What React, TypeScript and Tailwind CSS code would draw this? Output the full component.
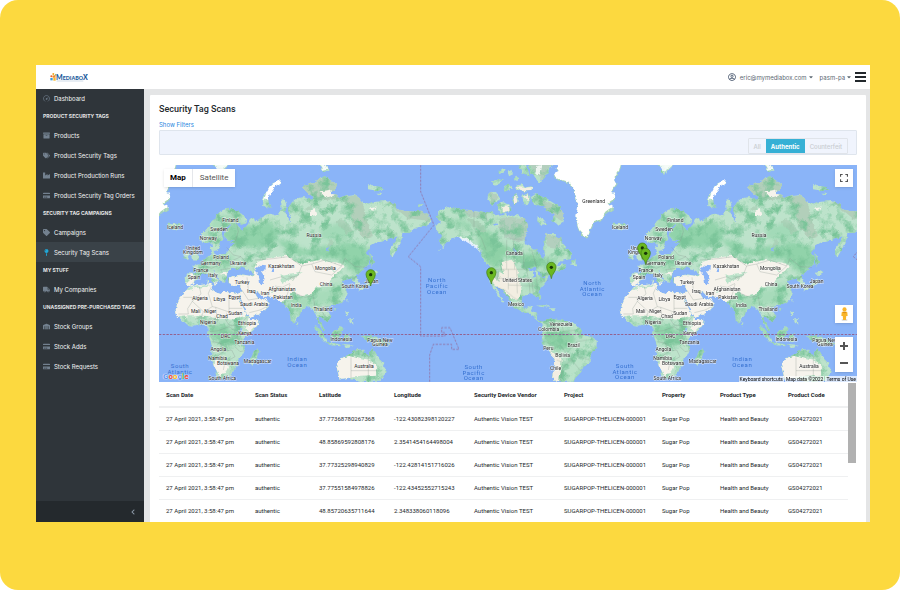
import React, { useState } from "react";
import {
  FaArchive,
  FaTags,
  FaTag,
  FaIndustry,
  FaCreditCard,
  FaMapPin,
  FaTruck,
  FaWarehouse,
  FaChevronLeft,
  FaCaretDown,
  FaRegUserCircle,
} from "react-icons/fa";

const SpeedIcon = ({ className }: { className?: string }) => (
  <svg viewBox="0 0 16 16" className={className} fill="none" stroke="currentColor" strokeWidth="1.500" strokeLinecap="round">
    <path d="M4 14A7 7 0 1 1 12 14M8 9L11 6" />
    <circle cx="8" cy="9" r="1" fill="currentColor" />
  </svg>
);

const menu = [
  { items: [{ label: "Dashboard", icon: SpeedIcon }] },
  {
    title: "Product Security Tags",
    items: [
      { label: "Products", icon: FaArchive },
      { label: "Product Security Tags", icon: FaTags },
      { label: "Product Production Runs", icon: FaIndustry },
      { label: "Product Security Tag Orders", icon: FaCreditCard },
    ],
  },
  {
    title: "Security Tag Campaigns",
    items: [
      { label: "Campaigns", icon: FaTag },
      { label: "Security Tag Scans", icon: FaMapPin, active: true },
    ],
  },
  { title: "My Stuff", items: [{ label: "My Companies", icon: FaTruck }] },
  {
    title: "Unassigned Pre-Purchased Tags",
    items: [
      { label: "Stock Groups", icon: FaWarehouse },
      { label: "Stock Adds", icon: FaCreditCard },
      { label: "Stock Requests", icon: FaCreditCard },
    ],
  },
];

const columns = [
  { label: "Scan Date", width: 89 },
  { label: "Scan Status", width: 64 },
  { label: "Latitude", width: 75 },
  { label: "Longitude", width: 80 },
  { label: "Security Device Vendor", width: 90 },
  { label: "Project", width: 98 },
  { label: "Property", width: 58 },
  { label: "Product Type", width: 68 },
  { label: "Product Code", width: 67 },
];

const scans = [
  ["37.77368780267368", "-122.43082398120227"],
  ["48.85869592808176", "2.3541454164498004"],
  ["37.77325298940829", "-122.42814151716026"],
  ["37.77551584978826", "-122.43452552715243"],
  ["48.85720635711644", "2.348338060118096"],
];

const eurasia =
  "M97 376L95 352L100 343L126 345L129 332L118 322L131 317L144 314L152 304L162 298L170 291L174 278L170 266L179 262L182 280L186 290L205 286L218 284L224 270L234 262L247 256L226 251L248 246L224 245L212 232L216 217L230 203L231 194L220 204L208 216L205 228L211 238L201 250L198 264L190 277L182 278L177 262L172 252L160 255L145 251L139 238L143 227L156 215L166 203L176 187L186 173L197 162L211 152L230 149L246 155L263 165L280 180L277 193L262 197L245 190L254 202L262 213L274 208L286 195L290 181L302 177L306 190L320 180L336 170L350 164L360 170L374 166L383 154L382 130L390 119L397 135L394 160L402 178L410 190L412 176L403 160L402 146L412 142L417 129L432 118L450 114L470 122L490 116L520 112L545 109L560 118L580 111L602 109L616 118L626 130L646 137L665 128L700 126L722 138L728 150L750 155L786 158L800 155L825 170L833 193L815 203L800 204L776 216L760 225L748 225L746 240L732 268L716 296L708 290L710 268L728 243L730 232L712 240L700 245L672 250L652 262L645 272L638 282L647 292L648 315L636 326L616 345L605 352L612 362L620 380L611 387L602 372L592 360L576 362L565 372L575 385L582 400L575 420L560 435L540 440L525 443L518 447L522 457L532 470L530 481L516 488L505 478L496 474L500 490L508 503L516 515L506 512L495 495L490 475L484 459L478 450L466 445L455 440L448 452L440 465L430 478L428 490L421 496L414 485L410 465L405 449L396 445L386 430L370 420L345 415L330 418L311 398L302 402L311 416L322 425L335 420L348 432L340 450L315 465L290 477L283 470L270 440L258 418L255 408L262 398L262 381L240 380L228 375L225 362L234 351L248 352L265 349L290 353L302 345L290 335L272 330L264 325L254 333L236 329L226 338L221 352L216 366L208 375L200 366L190 350L183 338L178 336L186 350L196 365L190 373L182 374L170 356L160 345L148 344L138 350L134 360L125 366L120 376L109 382Z";
const africa =
  "M106 386L118 380L142 378L170 375L176 379L172 390L185 400L200 405L216 398L235 402L250 405L257 410L255 420L270 450L280 470L290 484L315 480L317 490L300 515L276 535L268 552L272 575L265 590L255 600L250 620L240 640L225 655L200 660L190 652L185 630L172 600L176 572L170 550L162 530L165 510L155 499L140 498L120 503L100 500L84 485L70 470L65 455L70 435L80 415L95 400Z";
const australia =
  "M550 622L552 606L580 592L600 578L615 570L625 572L636 573L632 585L646 591L652 572L657 567L668 590L685 610L697 630L692 650L680 668L620 668L590 660L560 662L556 645Z";
const isles =
  "M112 303L118 285L114 270L124 262L130 272L127 280L138 297L136 306ZM91 300L92 285L104 280L108 290L102 303ZM42 205L45 194L58 196L76 192L80 205L66 214L50 213ZM328 138L326 122L332 108L342 98L347 84L360 72L382 65L380 74L362 84L350 98L342 112L344 132L352 144L340 149ZM650 278L656 290L660 312L654 325L650 304ZM650 342L668 334L676 340L660 352ZM657 358L656 375L640 386L615 395L612 390L634 382L645 370ZM294 590L300 580L312 568L316 582L306 610L297 621L288 612ZM482 502L492 505L510 525L520 545L516 552L500 535ZM518 552L545 553L560 557L560 562L530 559ZM533 525L545 515L562 500L571 508L562 525L558 540L542 545L532 535ZM572 525L590 521L580 528L592 535L582 536L584 550L574 548ZM616 528L632 532L645 530L670 537L700 552L710 560L692 557L675 562L655 550L640 550L632 538ZM574 455L582 460L583 472L576 468ZM584 482L596 480L598 495L588 492ZM579 422L584 420L582 433ZM540 448L547 448L544 456ZM429 488L435 497L430 503ZM566 558L600 560L580 568ZM180 374L190 375L186 380ZM158 362L164 363L163 374L158 372ZM446 82L462 78L486 66L500 58L515 52L530 65L548 76L545 92L530 102L545 112L560 118L520 124L490 120L462 106ZM640 85L650 76L658 84L680 86L690 92L664 97L645 94ZM670 104L685 104L680 110ZM496 15L512 15L524 34L512 40L500 28ZM170 15L230 15L222 25L206 36L198 50L188 42L192 27Z";
const deserts =
  "M60 475L60 370L260 372L278 470L235 482L160 474L110 472ZM228 352L300 352L310 310L355 296L400 290L420 305L440 318L470 308L500 303L540 312L570 318L560 340L538 350L522 378L490 382L470 408L440 412L415 398L400 420L350 450L290 480L262 440L262 385L228 378Z";

const americas =
  "M184 154L206 144L232 149L264 155L292 157L326 163L340 156L352 172L362 170L382 165L400 175L415 168L440 182L448 200L445 218L436 238L441 256L462 268L478 276L484 292L491 299L498 290L495 272L499 256L497 240L503 224L528 226L536 238L546 236L552 252L563 268L581 284L578 300L555 304L545 312L528 325L550 316L562 320L555 334L532 340L514 350L506 365L498 375L485 390L481 402L488 420L482 426L474 410L450 405L430 412L428 432L436 446L446 446L455 440L462 442L455 457L474 464L478 482L490 488L510 483L525 480L555 485L590 495L604 510L610 525L640 535L657 545L655 565L640 585L635 608L612 628L600 645L585 668L522 668L525 630L530 600L510 580L495 560L488 540L495 520L490 497L472 480L450 465L430 460L405 445L395 425L375 400L360 385L352 382L360 402L378 432L370 428L345 390L335 370L330 345L334 328L318 305L306 280L285 255L260 240L238 236L222 240L206 252L192 268L175 284L192 264L182 244L190 230L174 215L172 200L190 192L172 178Z";
const arctic =
  "M330 105L345 98L362 108L365 122L340 140L328 125ZM355 138L375 130L392 140L398 155L378 165L358 158ZM340 70L360 60L374 64L360 78L343 80ZM374 82L392 74L402 88L380 98ZM412 80L430 76L442 85L462 82L462 96L430 98L413 92ZM404 108L414 106L420 125L410 140L402 125ZM430 110L450 104L455 125L442 142L432 130ZM455 115L470 105L490 112L520 130L545 145L552 168L558 190L540 200L520 185L528 168L505 156L495 145L476 140L462 130ZM478 175L492 182L505 198L490 200L478 190ZM386 38L396 34L402 46L390 52ZM422 20L440 17L446 30L452 52L432 46ZM448 15L520 15L510 40L496 60L478 70L466 52L456 40ZM358 38L372 28L380 35L366 48ZM406 55L416 50L420 62L410 68ZM582 304L592 304L594 322L576 320ZM470 440L500 438L512 446L492 444ZM510 448L530 448L526 454L512 453ZM118 140L130 138L128 144L118 143ZM310 290L318 300L324 312L314 304ZM0 88L12 90L8 95L0 94Z";
const greenland =
  "M545 15L532 30L538 42L524 48L530 60L552 70L572 75L584 95L592 120L597 150L592 178L600 210L610 232L625 243L633 218L645 195L670 185L684 165L706 150L690 138L712 120L700 98L716 74L708 60L722 40L728 15Z";

type Label = [string, number, number];

const oldWorldLabels: Label[] = [
  ["Iceland", 60, 208],
  ["Finland", 226, 186],
  ["Sweden", 192, 213],
  ["Norway", 160, 241],
  ["United", 114, 270],
  ["Kingdom", 114, 282],
  ["Poland", 198, 296],
  ["Germany", 167, 316],
  ["Ukraine", 249, 315],
  ["France", 138, 336],
  ["Italy", 174, 350],
  ["Spain", 117, 358],
  ["Turkey", 261, 372],
  ["Russia", 477, 232],
  ["Kazakhstan", 379, 323],
  ["Mongolia", 511, 331],
  ["China", 513, 378],
  ["South Korea", 600, 384],
  ["Japan", 650, 370],
  ["Afghanistan", 381, 392],
  ["Pakistan", 384, 416],
  ["India", 424, 441],
  ["Thailand", 504, 453],
  ["Iraq", 289, 398],
  ["Iran", 330, 404],
  ["Saudi Arabia", 297, 438],
  ["Algeria", 135, 419],
  ["Libya", 193, 424],
  ["Egypt", 239, 418],
  ["Mali", 122, 460],
  ["Niger", 166, 460],
  ["Chad", 201, 475],
  ["Sudan", 241, 464],
  ["Nigeria", 159, 492],
  ["Ethiopia", 276, 496],
  ["Kenya", 270, 526],
  ["DRC", 212, 533],
  ["Tanzania", 268, 552],
  ["Angola", 190, 574],
  ["Namibia", 188, 601],
  ["Botswana", 219, 616],
  ["Madagascar", 308, 609],
  ["South Africa", 202, 660],
  ["Indonesia", 559, 543],
  ["Papua New", 675, 546],
  ["Guinea", 675, 558],
  ["Australia", 627, 624],
];

const newWorldLabels: Label[] = [
  ["Greenland", 641, 128],
  ["Canada", 403, 286],
  ["United States", 412, 367],
  ["Mexico", 408, 437],
  ["Venezuela", 543, 497],
  ["Colombia", 506, 514],
  ["Brazil", 581, 560],
  ["Peru", 505, 569],
  ["Bolivia", 548, 591],
  ["Chile", 527, 631],
];

const MapLabels = ({ labels }: { labels: Label[] }) => (
  <g
    fontSize={15}
    textAnchor="middle"
    fill="#1f1f1f"
    stroke="#ffffff"
    strokeOpacity={0.7}
    strokeWidth={3}
    paintOrder="stroke"
  >
    {labels.map(([text, x, y]) => (
      <text key={text} x={x} y={y}>
        {text}
      </text>
    ))}
  </g>
);

const OceanLabel = ({ lines, x, y }: { lines: string[]; x: number; y: number }) => (
  <g
    className="tracking-widest"
    fontSize={18}
    textAnchor="middle"
    fill="#3570d0"
  >
    {lines.map((line, i) => (
      <text key={line} x={x} y={y + i * 17}>
        {line}
      </text>
    ))}
  </g>
);

const OldWorld = ({ southAtlantic }: { southAtlantic: string[] }) => (
  <>
    <g filter="url(#coast)">
      <path d={eurasia + africa + australia + isles} fill="#bde3cb" />
      <g clipPath="url(#oldWorldLand)">
        <path
          d="M430 70L560 50L560 120L480 125ZM560 115L620 108L640 190L660 230L630 240L600 200L590 150ZM700 130L830 160L830 190L760 180Z"
          fill="#b2cfba"
        />
        <g filter="url(#soften)" fill="#91d3aa">
          <path d="M205 215L250 195L300 200L350 190L375 215L370 250L310 270L240 260L210 240Z" />
          <path d="M370 240L420 250L450 275L520 262L590 250L640 265L650 300L640 330L600 345L560 305L480 295L400 285Z" />
          <path d="M168 495L225 500L250 530L245 560L190 550L165 525Z" />
          <path d="M500 210L560 190L600 220L570 250L500 240Z" opacity="0.6" />
          <path d="M390 410L440 415L500 395L560 370L575 400L550 440L480 440L420 470Z" opacity="0.5" />
          <path d="M150 290L220 280L250 300L220 335L160 330Z" opacity="0.5" />
          <path d="M475 500L600 510L700 550L600 555L500 530Z" opacity="0.8" />
          <path d="M180 180L250 160L270 185L200 215L150 240Z" opacity="0.5" />
        </g>
        <rect width="860" height="680" filter="url(#forest)" />
        <path d={deserts} fill="#f6f3ec" />
        <path
          d="M110 345L128 350L122 370L105 375ZM185 600L205 612L225 620L215 645L195 650L180 625ZM550 605L590 592L620 600L650 605L668 620L670 650L600 655L560 665L545 640ZM285 475L320 475L310 500L290 520L275 510ZM465 160L485 150L490 168L468 172ZM500 100L530 95L545 108L515 116ZM195 345L225 338L220 350ZM645 150L665 145L660 155Z"
          fill="#f6f3ec"
        />
        <path
          d="M380 350L425 345L450 338L430 352L395 368L385 375ZM350 390L360 398L350 402ZM520 330L540 325L545 340ZM95 388L130 382L165 377L170 382L120 388L90 402Z"
          fill="#bce3ca"
        />
        <path
          d="M400 355L430 352L420 366ZM530 240L540 255L525 268L520 260ZM455 150L475 140L470 158ZM545 190L565 180L600 215L580 225Z"
          fill="#a5c9b0"
          opacity="0.6"
        />
      </g>
      <path d="M305 332L320 320L336 322L334 334L324 340L332 352L330 374L318 376L315 352ZM355 330L362 328L362 340L356 338ZM515 273L530 262L522 276ZM258 510L266 512L264 522L256 520Z" fill="#8ab4f8" />
      <path d="M330 122L336 104L346 86L362 72L383 63L380 74L362 86L350 102L342 122Z" fill="#ffffff" />
      <path d="M180 15L226 15L206 30L196 44ZM500 15L512 15L520 32L508 36Z" fill="#ffffff" opacity="0.85" />
    </g>
    {/* country borders */}
    <path
      d="M133 380L138 402L112 424M85 412L112 412L112 424L145 455L172 440L160 400L168 382M172 440L182 442L222 456L222 402M222 445L262 445M182 442L186 468L178 480M215 458L212 480L222 495L255 500L262 485L278 470M112 424L98 446L100 462L70 462M145 455L140 470L120 478M140 470L140 498M162 476L190 480L176 500M165 515L190 512L222 500L248 520L245 550L255 560M172 545L198 550L205 575L175 598M205 575L230 570L240 590L222 600L208 615L205 630M240 560L255 575L270 572M105 380M262 392L280 420L312 415M283 458L315 450L335 440M276 352L280 390L305 400M345 380L340 412M360 378L382 382L405 370M405 372L398 400L388 428M410 395L450 412L470 408M475 410L480 445L500 440L520 440M345 360L380 350L395 358L430 345L440 318M355 296L400 290L440 318L470 312L510 300L560 318L530 345L480 335L470 312M560 318L570 295L600 320L636 322M300 300L355 296M258 290L280 315M215 262L235 285L258 290L225 305L196 290M182 295L190 315L170 325L152 318M196 330L225 325M198 175L205 200L212 215M230 160L245 190L250 215L240 245M150 345L158 330M590 360L605 350M625 572M588 592L588 655M640 590L640 660M588 632L668 632M498 450L512 470"
      fill="none"
      stroke="#8a9690"
      strokeOpacity="0.6"
      strokeWidth="1.5"
    />
    <MapLabels labels={oldWorldLabels} />
    <OceanLabel lines={["Indian", "Ocean"]} x={427} y={604} />
    <OceanLabel lines={southAtlantic} x={75} y={624} />
  </>
);

const Greenland = () => (
  <g filter="url(#coast)">
    <path d={greenland} fill="#a9d6b6" />
    <path d={greenland} fill="#ffffff" transform="translate(9 -2) scale(0.985 0.985)" />
  </g>
);

const NewWorld = () => (
  <>
    <g filter="url(#coast)">
      <path d={americas + arctic} fill="#b9e2c8" />
      <g clipPath="url(#newWorldLand)">
        <path d="M365 175L440 180L450 200L440 240L420 250L380 235L360 205ZM448 15L520 15L490 65ZM330 100L365 110L340 140ZM500 225L550 240L540 270L505 265ZM250 150L325 165L330 185L270 175ZM460 110L550 150L555 190L520 170Z" fill="#b3cfbe" />
        <g filter="url(#soften)" fill="#8ed1a6">
          <path d="M290 210L330 215L360 250L420 285L470 285L500 300L540 300L520 330L460 325L420 300L375 290L360 330L330 320L305 270Z" />
          <path d="M495 510L560 515L590 530L580 570L530 575L500 550Z" />
          <path d="M440 380L490 345L500 370L475 400Z" opacity="0.6" />
          <path d="M400 430L430 455L480 485L430 462Z" />
          <path d="M200 190L250 180L290 200L260 215Z" opacity="0.6" />
        </g>
        <rect width="700" height="680" filter="url(#forest)" />
        <path d="M368 312L400 305L412 318L420 355L428 395L420 425L400 420L375 395L350 380L335 365L345 340L375 345ZM508 570L530 590L548 600L545 640L540 668L520 668L528 610ZM412 84L440 86L462 84L460 96L425 96ZM405 112L414 108L418 130L408 136ZM435 112L450 106L450 130ZM370 145L390 142L392 160L372 160Z" fill="#f3eee2" />
        <path d="M262 175L300 190L325 215L315 225L285 205ZM345 330L360 340L362 370L350 360Z" fill="#a4cdb2" opacity="0.8" />
      </g>
      <path d="M232 232L262 238L290 258L304 278L284 262L258 246ZM475 20L490 18L485 45L472 50Z" fill="#ffffff" opacity="0.8" />
      <path d="M448 332L470 326L476 334L466 340ZM462 342L468 340L468 358L462 358ZM478 340L486 342L488 354L480 350ZM486 356L502 350L498 357ZM405 268L412 276L416 290L408 284ZM345 195L356 198L350 204Z" fill="#8ab4f8" />
    </g>
    <path
      d="M282 155L282 205L305 235L318 270M334 328L440 328L448 332M488 350L515 335M352 383L375 390L400 412L428 428M380 240L380 328M400 240L404 328M430 270L432 328M380 235L440 240M455 270L470 322M505 290L500 330M355 330L352 355L385 355M385 328L385 388M410 328L412 400M385 355L450 355M385 375L470 378M440 328L448 375L450 402M455 355L460 400M470 345L472 400M480 365L505 360M500 490L505 505L530 515L530 495M545 487L550 515L585 510M500 530L520 520M510 575L540 555L560 580L575 600L550 620L540 668M520 560L500 545M560 580L590 545L620 540M590 545L595 590L630 600M575 600L600 630M530 600L545 605"
      fill="none"
      stroke="#7f9488"
      strokeOpacity="0.5"
      strokeWidth="1.5"
    />
    <Greenland />
    <MapLabels labels={newWorldLabels} />
    <OceanLabel lines={["North", "Pacific", "Ocean"]} x={171} y={367} />
    <OceanLabel lines={["South", "Pacific", "Ocean"]} x={281} y={627} />
    <OceanLabel lines={["North", "Atlantic", "Ocean"]} x={637} y={375} />
  </>
);

const Pin = ({ x, y }: { x: number; y: number }) => (
  <g transform={`translate(${x} ${y})`}>
    <path
      d="M0 0C-1 -14 -14 -20 -14 -35A14 14 0 0 1 14 -35C14 -20 1 -14 0 0Z"
      fill="#6bb820"
      stroke="#3f7d14"
      strokeWidth="2"
    />
    <circle cy="-34" r="5" fill="#173607" />
  </g>
);

const WorldMap = () => (
  <svg
    viewBox="0 0 2094 651"
    preserveAspectRatio="xMidYMid slice"
    className="block h-full w-full bg-[#8ab4f8] font-['Roboto',sans-serif]"
    role="img"
    aria-label="Scan locations"
  >
    <defs>
      <filter id="coast" x="-5%" y="-5%" width="110%" height="110%">
        <feTurbulence type="fractalNoise" baseFrequency="0.07" numOctaves="3" seed="4" />
        <feDisplacementMap in="SourceGraphic" scale="18" xChannelSelector="R" yChannelSelector="G" colorInterpolationFilters="sRGB" />
      </filter>
      <filter id="soften">
        <feGaussianBlur stdDeviation="6" />
      </filter>
      <filter id="forest" x="0" y="0" width="100%" height="100%" colorInterpolationFilters="sRGB">
        <feTurbulence type="fractalNoise" baseFrequency="0.03" numOctaves="4" seed="9" />
        <feColorMatrix values="0 0 0 0 0.48  0 0 0 0 0.77  0 0 0 0 0.6  3.5 0 0 0 -1.6" />
      </filter>
      <clipPath id="oldWorldLand">
        <path d={eurasia + africa + australia + isles} />
      </clipPath>
      <clipPath id="newWorldLand">
        <path d={americas + arctic} />
      </clipPath>
    </defs>
    <g transform="translate(-672 -15)">
      <Greenland />
    </g>
    <g transform="translate(-12 -15)">
      <OldWorld southAtlantic={["South", "Atlantic"]} />
    </g>
    <g transform="translate(663 -15)">
      <NewWorld />
    </g>
    <g transform="translate(1323 -15)">
      <OldWorld southAtlantic={["South", "Atlantic", "Ocean"]} />
    </g>
    {/* equator and date line */}
    <g fill="none" stroke="#94618f" strokeWidth="2" strokeDasharray="7 4">
      <path d="M0 508H2094" />
      <path
        d="M122 15V95L162 195L85 290L122 320V528H195V518H185V503H210L237 568H215V553H160L149 585V668"
        transform="translate(663 -15)"
      />
      <path d="M162 195L85 290L122 320" transform="translate(1998 -15)" />
    </g>
    <Pin x={635} y={363} />
    <Pin x={997} y={357} />
    <Pin x={1177} y={341} />
    <Pin x={1450} y={283} />
    <Pin x={1460} y={299} />
  </svg>
);

const Logo = () => (
  <a href="#" aria-label="Mediabox" className="flex items-center">
    <svg viewBox="0 0 114 30" className="h-[10px] w-[38px]">
      <circle cx="10" cy="6" r="3" fill="#f5a623" />
      <circle cx="4" cy="13" r="3" fill="#e8632c" />
      <path d="M7 11L16 9L17 17L8 17Z" fill="#f28c28" />
      <path d="M1 18H8V25H1Z" fill="#3b9bdc" />
      <path d="M10 18H17V26H10Z" fill="#f5b82e" />
      <path d="M15 5L20 8L17 12Z" fill="#69b245" />
      <text x="18" y="23" className="font-['Lato',sans-serif] font-black" fill="#1b5a9c">
        <tspan fontSize="21">M</tspan>
        <tspan fontSize="16">EDIABO</tspan>
        <tspan fontSize="21">X</tspan>
      </text>
      <path d="M20 27H100" stroke="#9db4cc" strokeWidth="1.500" />
      <path d="M107 8H112" stroke="#1b5a9c" strokeWidth="2" />
    </svg>
  </a>
);

const Sidebar = () => (
  <aside className="flex w-[108px] shrink-0 flex-col bg-[#2f353a]">
    <nav className="-mt-px min-h-0 flex-1 overflow-hidden">
      {menu.map((group, i) => (
        <div key={i}>
          {group.title && (
            <h2 className="flex h-[17px] items-center pl-[7px] text-[5px] font-bold whitespace-nowrap text-[#e4e5e6] uppercase">
              {group.title}
            </h2>
          )}
          {group.items.map(({ label, icon: Icon, active }: any) => (
            <a
              key={label}
              href="#"
              className={
                "flex h-5 items-center gap-1 pl-[7px] text-[6px] whitespace-nowrap text-[#f4f5f6] " +
                (active ? "bg-[#3a4248]" : "")
              }
            >
              <Icon className={active ? "size-[7px] text-[#20a8d8]" : "size-[7px] text-[#73818f]"} />
              {label}
            </a>
          ))}
        </div>
      ))}
    </nav>
    <button aria-label="Collapse sidebar" className="flex h-[21px] items-center justify-end bg-[#24292d] pr-2 text-[#8a97a5]">
      <FaChevronLeft className="size-[6px]" />
    </button>
  </aside>
);

const filters = ["All", "Authentic", "Counterfeit"];

export default function App() {
  const [status, setStatus] = useState("Authentic");

  return (
    <div className="h-screen bg-white pb-[3px] font-['Inter',sans-serif]">
      <div className="h-full rounded-[18px] bg-[#fcd93f] pt-[65px] pr-[30px] pb-[68px] pl-9">
        <div className="flex h-full flex-col overflow-hidden bg-[#e4e5e6]">
          {/* Top bar */}
          <header className="flex h-6 shrink-0 items-center justify-between bg-white pr-1 pl-[14px]">
            <Logo />
            <div className="flex items-center text-[6px] text-[#5c6873]">
              <FaRegUserCircle className="mr-1 size-2 text-[#4f5d73]" />
              <button className="flex items-center gap-[1px]">
                eric@mymediabox.com <FaCaretDown className="size-[6px]" />
              </button>
              <button className="ml-[6px] flex items-center gap-[1px]">
                pasm-pa <FaCaretDown className="size-[6px]" />
              </button>
              <button aria-label="Menu" className="ml-[3px] flex w-[11px] flex-col gap-[2px]">
                <span className="h-[2px] bg-[#23282c]" />
                <span className="h-[2px] bg-[#23282c]" />
                <span className="h-[2px] bg-[#23282c]" />
              </button>
            </div>
          </header>

          <div className="flex min-h-0 flex-1">
            <Sidebar />
            <main className="flex min-w-0 flex-1 pt-[6px] pr-1 pl-[6px]">
              <section className="flex min-w-0 flex-1 flex-col rounded-t-[1px] bg-white px-[9px] pt-2">
                <h1 className="font-['Roboto',sans-serif] text-[9px] leading-3 font-medium text-[#23282c]">Security Tag Scans</h1>
                <a href="#" className="mt-[6px] self-start text-[6px] leading-2 text-[#1f86e0]">
                  Show Filters
                </a>
                <div className="mt-[1px] flex h-[25px] shrink-0 items-end justify-end rounded-[1px] border border-[#dfe5ed] bg-[#f0f4fd] pr-2">
                  <div className="flex h-4 rounded-[1px] border border-[#e0e4ea]">
                    {filters.map((name) => (
                      <button
                        key={name}
                        onClick={() => setStatus(name)}
                        className={
                          "px-[5px] text-[6px] " +
                          (name === status ? "bg-[#36b0d5] font-bold text-white" : "font-medium text-[#c8ccd1]")
                        }
                      >
                        {name}
                      </button>
                    ))}
                  </div>
                </div>

                {/* Map */}
                <div className="relative mt-[10px] h-[217px] shrink-0 overflow-hidden font-['Roboto',sans-serif]">
                  <WorldMap />
                  <div className="absolute top-1 left-[5px] flex h-[18px] bg-white text-[8px] shadow-sm">
                    <button className="border-r border-gray-200 px-[6px] font-bold text-black">Map</button>
                    <button className="px-[7px] text-[#565656]">Satellite</button>
                  </div>
                  <button aria-label="Toggle fullscreen view" className="absolute top-1 right-1 flex size-[18px] items-center justify-center bg-white shadow-sm">
                    <svg viewBox="0 0 18 18" className="size-2" fill="#555">
                      <path d="M0 0H6V2.500H2.500V6H0ZM12 0H18V6H15.500V2.500H12ZM0 12H2.500V15.500H6V18H0ZM15.500 12H18V18H12V15.500H15.500Z" />
                    </svg>
                  </button>
                  <button aria-label="Street View" className="absolute right-1 bottom-[59px] flex size-[18px] items-center justify-center bg-white shadow-sm">
                    <svg viewBox="0 0 24 40" className="h-[14px] w-[9px]">
                      <ellipse cx="12" cy="37" rx="9" ry="2.500" fill="#d9d9d9" />
                      <circle cx="12" cy="7" r="6" fill="#f9b52b" />
                      <path d="M4 15Q12 10 20 15L21 26H17L16 37H8L7 26H3Z" fill="#f9b52b" />
                      <path d="M7 13Q12 17 17 13V16Q12 20 7 16Z" fill="#d98a15" />
                    </svg>
                  </button>
                  <div className="absolute right-1 bottom-[10px] flex w-[18px] flex-col bg-white shadow-sm">
                    <button aria-label="Zoom in" className="flex h-[17px] items-center justify-center">
                      <svg viewBox="0 0 8 8" className="size-2" fill="#555">
                        <path d="M3 0H5V3H8V5H5V8H3V5H0V3H3Z" />
                      </svg>
                    </button>
                    <button aria-label="Zoom out" className="flex h-[18px] items-center justify-center">
                      <svg viewBox="0 0 8 8" className="size-2" fill="#555">
                        <path d="M0 3H8V5H0Z" />
                      </svg>
                    </button>
                  </div>
                  <div className="absolute bottom-[1px] left-1 text-[8px] leading-2 font-bold [text-shadow:0_0_1px_#fff,0_0_1px_#fff]">
                    <span className="text-[#5a93f0]">G</span>
                    <span className="text-[#ea4335]">o</span>
                    <span className="text-[#fbbc05]">o</span>
                    <span className="text-[#5a93f0]">g</span>
                    <span className="text-[#34a853]">l</span>
                    <span className="text-[#ea4335]">e</span>
                  </div>
                  <div className="absolute right-0 bottom-0 flex gap-[1px] text-[5px] leading-[6px] text-black">
                    <button className="bg-white/70 px-[1px]">Keyboard shortcuts</button>
                    <span className="bg-white/70 px-[1px]">Map data ©2022</span>
                    <a href="#" className="bg-white/70 px-[1px]">Terms of Use</a>
                  </div>
                </div>

                {/* Scans */}
                <div className="flex min-h-0 flex-1 overflow-hidden font-['Roboto',sans-serif]">
                  <table className="w-full table-fixed self-start text-left text-[6px] whitespace-nowrap text-[#23282c]">
                    <colgroup>
                      {columns.map((col) => (
                        <col key={col.label} style={{ width: `${(col.width / 689) * 100}%` }} />
                      ))}
                    </colgroup>
                    <thead>
                      <tr className="h-[25px] border-b-2 border-[#eff0f1]">
                        {columns.map((col) => (
                          <th key={col.label} className="p-0 pl-[7px] font-bold">
                            {col.label}
                          </th>
                        ))}
                      </tr>
                    </thead>
                    <tbody>
                      {scans.map(([lat, lng]) => (
                        <tr key={lat} className="h-[23px] border-b border-[#eff0f1]">
                          <td className="p-0 pl-[7px]">27 April 2021, 3:58:47 pm</td>
                          <td className="p-0 pl-[7px]">authentic</td>
                          <td className="p-0 pl-[7px]">{lat}</td>
                          <td className="p-0 pl-[7px]">{lng}</td>
                          <td className="p-0 pl-[7px]">Authentic Vision TEST</td>
                          <td className="p-0 pl-[7px]">SUGARPOP-THELICEN-000001</td>
                          <td className="p-0 pl-[7px]">Sugar Pop</td>
                          <td className="p-0 pl-[7px]">Health and Beauty</td>
                          <td className="p-0 pl-[7px]">GS04272021</td>
                        </tr>
                      ))}
                    </tbody>
                  </table>
                  <div className="w-[9px] shrink-0 pt-[1px] pr-[1px]">
                    <div className="h-20 bg-[#b1b1b1]" />
                  </div>
                </div>
              </section>
            </main>
          </div>
        </div>
      </div>
    </div>
  );
}
